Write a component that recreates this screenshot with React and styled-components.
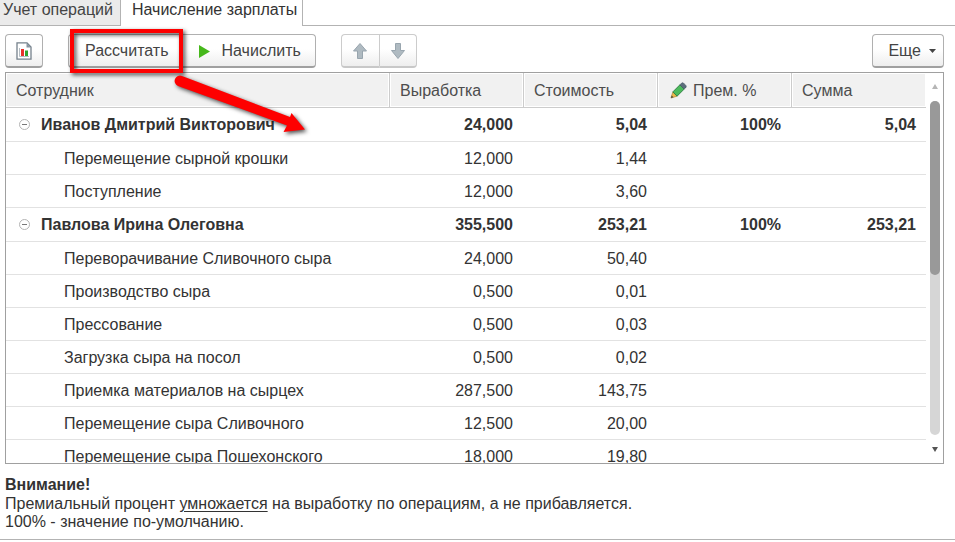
import React from "react";
import styled, { createGlobalStyle, css } from "styled-components";

const GlobalStyle = createGlobalStyle`
  * { box-sizing: border-box; }
  body {
    margin: 0;
    background: #fff;
    color: #333;
    font: 16px/18px "Liberation Sans", Arial, sans-serif;
  }
  button { font: inherit; }
`;

const Page = styled.main`
  position: relative;
  display: flex;
  flex-direction: column;
  height: 100vh;
  padding-bottom: 2px;
  overflow: hidden;
`;

const Tabs = styled.nav`
  display: flex;
  height: 26px;
  &::after {
    content: "";
    flex: 1;
    border-bottom: 1px solid #b3b3b3;
  }
`;

const Tab = styled.button`
  padding: 0 ${(p) => (p.$active ? 5 : 7)}px 6px ${(p) => (p.$active ? 11 : 3)}px;
  border: 0 solid #b3b3b3;
  border-right-width: 1px;
  border-bottom-width: ${(p) => (p.$active ? 0 : 1)}px;
  background: ${(p) => (p.$active ? "#fff" : "#ebebeb")};
  color: ${(p) => (p.$active ? "#333" : "#444")};
  line-height: 20px;
  white-space: nowrap;
`;

const Content = styled.section`
  flex: 1;
  min-height: 0;
  display: flex;
  flex-direction: column;
  padding: 8px 11px 8px 5px;
  border-bottom: 1px solid #b3b3b3;
`;

const Toolbar = styled.div`
  display: flex;
  height: 34px;
  margin-bottom: 4px;
`;

const Spacer = styled.div`
  flex: 1;
`;

const Group = styled.div`
  display: flex;
  margin: 0 0 0 25px;
  & > button:not(:first-child) {
    border-left: ${(p) => (p.$divided ? "1px solid #ccc" : "0")};
    border-top-left-radius: 0;
    border-bottom-left-radius: 0;
  }
  & > button:not(:last-child) {
    border-right: 0;
    border-top-right-radius: 0;
    border-bottom-right-radius: 0;
  }
`;

const Button = styled.button`
  display: flex;
  align-items: center;
  justify-content: center;
  gap: ${(p) => p.$gap || 0}px;
  height: 34px;
  padding: 1px ${(p) => p.$pad || 0}px 0;
  ${(p) => p.$square && css`width: 38px;`}
  border: 1px solid ${(p) => (p.$muted ? "#ccc" : "#b0b0b0")};
  border-bottom: 2px solid ${(p) => (p.$muted ? "#c8c8c8" : "#a0a0a0")};
  border-radius: 4px;
  background: linear-gradient(#fff 45%, #eee);
  color: #444;
  white-space: nowrap;
`;

const MoreLabel = styled.span`
  padding-left: 8px;
`;

const Panel = styled.div`
  flex: 1;
  min-height: 0;
  display: flex;
  border: 1px solid #a0a0a0;
  overflow: hidden;
`;

const Viewport = styled.div`
  flex: 1;
  min-width: 0;
  overflow: hidden;
`;

const Table = styled.table`
  width: 100%;
  table-layout: fixed;
  border-collapse: separate;
  border-spacing: 0;
  col.measure { width: 134px; }
`;

const HeadCell = styled.th`
  height: 35px;
  padding: 1px 10px 0;
  border: 0 solid #ccc;
  border-bottom-width: 1px;
  border-right-width: ${(p) => (p.$last ? 0 : 1)}px;
  background: #f1f1f1;
  box-shadow: inset 0 0 0 1px #fff;
  color: #4d4d4d;
  font-weight: 400;
  text-align: left;
  white-space: nowrap;
`;

const HeadLabel = styled.span`
  display: flex;
  align-items: center;
  gap: 6px;
  height: 18px;
  padding-left: ${(p) => (p.$icon ? 2 : 0)}px;
`;

const Row = styled.tr`
  height: ${(p) => (p.$group ? 34 : 33)}px;
  font-weight: ${(p) => (p.$group ? 700 : 400)};
`;

const NameCell = styled.td`
  padding: ${(p) => (p.$group ? 0 : 2)}px 0 0 ${(p) => (p.$group ? 13 : 58)}px;
  border-bottom: 1px solid #e2e2e2;
  white-space: nowrap;
`;

const NameLine = styled.span`
  display: flex;
  align-items: center;
  gap: 11px;
`;

const NumberCell = styled.td`
  padding: ${(p) => (p.$group ? 0 : 2)}px ${(p) => (p.$last ? 10 : 11)}px 0 0;
  border-bottom: 1px solid #e2e2e2;
  text-align: right;
`;

const Toggle = styled.button`
  display: flex;
  padding: 0;
  border: 0;
  background: none;
`;

const Scroll = styled.div`
  display: flex;
  flex-direction: column;
  align-items: center;
  width: 17px;
  padding: 11px 0;
`;

const Track = styled.div`
  flex: 1;
  width: 10px;
  margin: 12px 0;
  border-radius: 5px;
  background: #d6d6d6;
`;

const Thumb = styled.div`
  height: 52%;
  border-radius: 5px;
  background: #999;
`;

const Note = styled.p`
  margin: 12px 0 0;
  strong { display: block; margin-bottom: 1px; }
  u { text-underline-offset: 2px; }
`;

const Annotation = styled.svg`
  position: absolute;
  top: 0;
  left: 0;
  pointer-events: none;
  filter: drop-shadow(2px 2px 2px rgba(0, 0, 0, 0.7));
`;

const ReportIcon = () => (
  <svg width="16" height="18" viewBox="0 0 16 18">
    <path d="M1 .8H11L15 5V17.2H1Z" fill="#fff" stroke="#75818c" strokeWidth="1.3" />
    <path d="M10.500 1V5.500H15Z" fill="#8795a0" />
    <path d="M3.500 6V14.500H13" fill="none" stroke="#b5bdc3" />
    <path d="M5 7h3v7H5z" fill="#e8322a" />
    <path d="M9 8.500h3V14H9z" fill="#2fa32f" />
  </svg>
);

const PlayIcon = () => (
  <svg width="11" height="13" viewBox="0 0 11 13">
    <path d="M0 0L11 6.500L0 13Z" fill="#46b81b" />
  </svg>
);

const ArrowIcon = ({ down }) => (
  <svg width="16" height="16" viewBox="0 0 16 16">
    <path
      d={down ? "M5.500 .5h5v7h4L8 15.500L1.500 7.500h4Z" : "M8 .5L14.500 8h-4v7.500h-5V8h-4Z"}
      fill="#afbac1"
      stroke="#98a5ae"
      strokeLinejoin="round"
    />
  </svg>
);

const CaretIcon = () => (
  <svg width="7" height="4" viewBox="0 0 7 4">
    <path d="M0 0H7L3.500 4Z" fill="#444" />
  </svg>
);

const PencilIcon = () => (
  <svg width="17" height="17" viewBox="0 0 18 18">
    <path d="M1 17L3 10.500L7.500 15Z" fill="#f0b94a" stroke="#a88235" strokeWidth=".7" />
    <path d="M1 17L1.800 14.300L3.700 16.200Z" fill="#444" />
    <path d="M3 10.500L10.500 3L15 7.500L7.500 15Z" fill="#4dbb5c" stroke="#2f7e43" />
    <path d="M10.500 3L12.500 1Q13.500 .5 14.300 1.200L16.800 3.700Q17.500 4.500 17 5.500L15 7.500Z" fill="#5c6e7c" stroke="#455765" strokeWidth=".7" />
  </svg>
);

const MinusIcon = () => (
  <svg width="11" height="11" viewBox="0 0 11 11">
    <circle cx="5.500" cy="5.500" r="5" fill="#fff" stroke="#b4b4b4" />
    <path d="M3 5.500H8" stroke="#777" />
  </svg>
);

const ScrollArrow = ({ down }) => (
  <svg width="6" height="5" viewBox="0 0 6 5">
    <path d={down ? "M0 0H6L3 5Z" : "M0 5H6L3 0Z"} fill={down ? "#555" : "#b5b5b5"} />
  </svg>
);

const rows = [
  { group: true, name: "Иванов Дмитрий Викторович", values: ["24,000", "5,04", "100%", "5,04"] },
  { name: "Перемещение сырной крошки", values: ["12,000", "1,44", "", ""] },
  { name: "Поступление", values: ["12,000", "3,60", "", ""] },
  { group: true, name: "Павлова Ирина Олеговна", values: ["355,500", "253,21", "100%", "253,21"] },
  { name: "Переворачивание Сливочного сыра", values: ["24,000", "50,40", "", ""] },
  { name: "Производство сыра", values: ["0,500", "0,01", "", ""] },
  { name: "Прессование", values: ["0,500", "0,03", "", ""] },
  { name: "Загрузка сыра на посол", values: ["0,500", "0,02", "", ""] },
  { name: "Приемка материалов на сырцех", values: ["287,500", "143,75", "", ""] },
  { name: "Перемещение сыра Сливочного", values: ["12,500", "20,00", "", ""] },
  { name: "Перемещение сыра Пошехонского", values: ["18,000", "19,80", "", ""] },
];

export default function App() {
  return (
    <Page>
      <GlobalStyle />
      <Tabs>
        <Tab>Учет операций</Tab>
        <Tab $active>Начисление зарплаты</Tab>
      </Tabs>
      <Content>
        <Toolbar>
          <Button $square aria-label="Отчет"><ReportIcon /></Button>
          <Group>
            <Button $pad={16}>Рассчитать</Button>
            <Button $pad={14} $gap={12}><PlayIcon />Начислить</Button>
          </Group>
          <Group $divided>
            <Button $square $muted aria-label="Вверх"><ArrowIcon /></Button>
            <Button $square $muted aria-label="Вниз"><ArrowIcon down /></Button>
          </Group>
          <Spacer />
          <Button $pad={7} $gap={8}><MoreLabel>Еще</MoreLabel><CaretIcon /></Button>
        </Toolbar>
        <Panel>
          <Viewport>
            <Table>
              <colgroup>
                <col />
                <col className="measure" />
                <col className="measure" />
                <col className="measure" />
                <col className="measure" />
              </colgroup>
              <thead>
                <tr>
                  <HeadCell><HeadLabel>Сотрудник</HeadLabel></HeadCell>
                  <HeadCell><HeadLabel>Выработка</HeadLabel></HeadCell>
                  <HeadCell><HeadLabel>Стоимость</HeadLabel></HeadCell>
                  <HeadCell><HeadLabel $icon><PencilIcon />Прем. %</HeadLabel></HeadCell>
                  <HeadCell $last><HeadLabel>Сумма</HeadLabel></HeadCell>
                </tr>
              </thead>
              <tbody>
                {rows.map((row) => (
                  <Row key={row.name} $group={row.group}>
                    <NameCell $group={row.group}>
                      <NameLine>
                        {row.group && <Toggle aria-label="Свернуть"><MinusIcon /></Toggle>}
                        {row.name}
                      </NameLine>
                    </NameCell>
                    {row.values.map((value, i) => (
                      <NumberCell key={i} $group={row.group} $last={i === 3}>{value}</NumberCell>
                    ))}
                  </Row>
                ))}
              </tbody>
            </Table>
          </Viewport>
          <Scroll>
            <ScrollArrow />
            <Track><Thumb /></Track>
            <ScrollArrow down />
          </Scroll>
        </Panel>
        <Note>
          <strong>Внимание!</strong>
          Премиальный процент <u>умножается</u> на выработку по операциям, а не прибавляется.
          <br />
          100% - значение по-умолчанию.
        </Note>
      </Content>
      <Annotation width="320" height="145" viewBox="0 0 320 145">
        <rect x="72" y="31" width="109" height="40" fill="none" stroke="#fe0000" strokeWidth="4" />
        <path
          d="M182 76L290 117L291.500 113L305 129.500L283.500 132L287 125.500L178 86A5.300 5.300 0 0 1 182 76Z"
          fill="#fe0000"
        />
      </Annotation>
    </Page>
  );
}
